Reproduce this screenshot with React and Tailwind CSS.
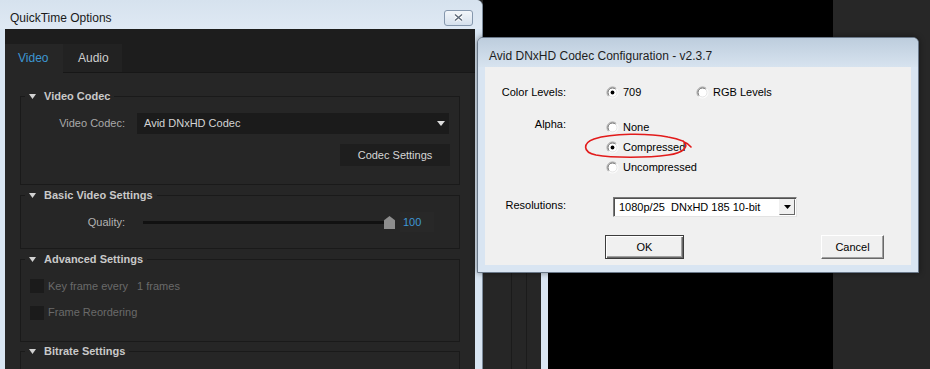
import React from "react";

// Windows classic radio button
const Radio = ({ checked }) => (
  <svg width="13" height="13" viewBox="0 0 13 13" className="shrink-0">
    <circle cx="6.5" cy="6.5" r="5.5" fill="#fff" />
    <path d="M10.4 2.6A5.5 5.5 0 0 0 2.6 10.4" fill="none" stroke="#a0a0a0" />
    <path d="M9.7 3.3A4.5 4.5 0 0 0 3.3 9.7" fill="none" stroke="#696969" />
    <path d="M2.6 10.4A5.5 5.5 0 0 0 10.4 2.6" fill="none" stroke="#ffffff" />
    <path d="M3.3 9.7A4.5 4.5 0 0 0 9.7 3.3" fill="none" stroke="#e3e3e3" />
    {checked && <circle cx="6.5" cy="6.5" r="1.9" fill="#000" />}
  </svg>
);

const RadioItem = ({ checked, label, className = "" }) => (
  <div className={`flex items-center gap-[4px] ${className}`}>
    <Radio checked={checked} />
    <span>{label}</span>
  </div>
);

const CloseButton = () => (
  <div className="w-[29px] h-[16px] rounded-[3px] border border-[#8597ad] bg-gradient-to-b from-[#f2f6fa] to-[#d6e1ed] flex items-center justify-center">
    <svg width="11" height="9" viewBox="0 0 11 9">
      <path d="M2 1.5L9 7.5M9 1.5L2 7.5" stroke="#fff" strokeWidth="3.4" />
      <path d="M2 1.5L9 7.5M9 1.5L2 7.5" stroke="#5b6777" strokeWidth="1.5" />
    </svg>
  </div>
);

const Group = ({ title, className = "", children }) => (
  <fieldset className={`mx-[15px] border border-[#1a1a1a] ${className}`}>
    <legend className="ml-[4px] px-[4px] h-[16px] flex items-center gap-[8px] text-[11px] font-bold text-[#c9c9c9]">
      <svg width="7" height="5" viewBox="0 0 7 5" className="shrink-0">
        <path d="M0 0h7L3.5 5z" fill="#d2d2d2" />
      </svg>
      <span>{title}</span>
    </legend>
    {children}
  </fieldset>
);

const Checkbox = ({ label }) => (
  <div className="flex items-center ml-[9px] h-[14px]">
    <div className="w-[14px] h-[14px] bg-[#1b1b1b]" />
    <span className="ml-[4px] text-[#6a6a6a]">{label}</span>
  </div>
);

const QuickTimeWindow = () => (
  <div className="absolute left-0 top-0 w-[483px] h-[400px] flex flex-col bg-[#d8e5f2] border-r border-[#7d8c9c] rounded-tr-[6px]">
    <div className="h-[29px] shrink-0 flex items-center justify-between pl-[10px] pr-[9px] pt-[6px] rounded-tr-[6px] bg-gradient-to-b from-[#d6e2ee] to-[#dfe9f4]">
      <span className="text-[12px] text-[#1a1a1a]">QuickTime Options</span>
      <CloseButton />
    </div>
    <div className="flex-1 ml-[5px] mr-[7px] bg-[#1d1d1d] flex flex-col">
      <div className="h-[43px] shrink-0 flex items-end text-[12px]">
        <div className="relative z-10 -mb-px w-[58px] h-[29px] pl-[13px] leading-[29px] bg-[#262626] text-[#3d96d2]">
          Video
        </div>
        <div className="w-[59px] h-[28px] pl-[15px] leading-[28px] bg-[#222222] text-[#cfcfcf]">
          Audio
        </div>
      </div>
      <div className="flex-1 bg-[#262626] border-t border-[#171717] flex flex-col text-[11px]">
        <Group title="Video Codec" className="mt-[15px] pb-[18px] flex flex-col">
          <div className="mt-[9px] flex items-center">
            <span className="w-[104px] text-right text-[#a9a9a9]">Video Codec:</span>
            <div className="ml-[12px] w-[312px] h-[21px] bg-[#1b1b1b] flex items-center justify-between pl-[7px] pr-[4px] text-[#d4d4d4]">
              <span>Avid DNxHD Codec</span>
              <svg width="8" height="5" viewBox="0 0 8 5">
                <path d="M0 0h8L4 5z" fill="#dcdcdc" />
              </svg>
            </div>
          </div>
          <div className="mt-[10px] self-end mr-[9px] w-[110px] h-[22px] bg-[#1e1e1e] flex items-center justify-center text-[#d6d6d6]">
            Codec Settings
          </div>
        </Group>

        <Group title="Basic Video Settings" className="mt-[2px] pb-[16px]">
          <div className="mt-[9px] h-[20px] flex items-center">
            <span className="w-[104px] text-right text-[#b2b2b2]">Quality:</span>
            <div className="relative ml-[18px] w-[252px] h-[13px] flex items-center">
              <div className="w-[247px] h-[3px] bg-[#111111]" />
              <svg width="11" height="13" viewBox="0 0 11 13" className="absolute right-0 top-0">
                <path d="M0 4.5Q0 4 1 3.4L5.5 0L10 3.4Q11 4 11 4.5V13H0Z" fill="#8d8d8d" />
              </svg>
            </div>
            <div className="ml-[5px] px-[3px] h-[20px] w-[34px] flex items-center bg-[#282828] text-[#3e97d4]">100</div>
          </div>
        </Group>

        <Group title="Advanced Settings" className="mt-[2px] pb-[21px] flex flex-col">
          <div className="mt-[11px] flex items-center">
            <Checkbox label="Key frame every" />
            <span className="ml-[9px] text-[#6a6a6a]">1 frames</span>
          </div>
          <div className="mt-[11px]">
            <Checkbox label="Frame Reordering" />
          </div>
        </Group>

        <Group title="Bitrate Settings" className="mt-[2px] h-[60px]" />
      </div>
    </div>
  </div>
);

const WinButton = ({ label, isDefault, className = "" }) => (
  <div
    className={`h-[24px] flex items-center justify-center bg-[#f0f0f0] ${
      isDefault
        ? "border border-[#3c3c3c] shadow-[inset_1px_1px_0_#fff,inset_-1px_-1px_0_#696969,inset_-2px_-2px_0_#a0a0a0]"
        : "border border-t-white border-l-white border-r-[#696969] border-b-[#696969] shadow-[inset_-1px_-1px_0_#a0a0a0]"
    } ${className}`}
  >
    {label}
  </div>
);

const AvidDialog = () => (
  <div className="absolute left-[477px] top-[37px] w-[442px] h-[236px] flex flex-col border border-[#6a7889] rounded-t-[6px] bg-[#d9e5f2] shadow-[0_0_6px_rgba(0,0,0,0.45)]">
    <div className="h-[29px] shrink-0 flex items-center pl-[11px] pt-[7px] rounded-t-[5px] bg-gradient-to-b from-[#bdcddd] to-[#d7e3ef] text-[12px] text-[#1e1e1e]">
      Avid DNxHD Codec Configuration - v2.3.7
    </div>
    <div className="relative flex-1 ml-[7px] mr-[7px] mb-[7px] bg-[#f0f0f0] flex flex-col text-[11px] text-black">
      <div className="mt-[17px] h-[16px] flex items-center">
        <span className="w-[81px] text-right">Color Levels:</span>
        <div className="ml-[40px] flex">
          <RadioItem checked label="709" className="w-[90px]" />
          <RadioItem label="RGB Levels" />
        </div>
      </div>

      <div className="mt-[17px] flex items-start">
        <span className="w-[81px] text-right leading-[14px]">Alpha:</span>
        <div className="ml-[40px] flex flex-col">
          <RadioItem label="None" className="h-[20px]" />
          <RadioItem checked label="Compressed" className="h-[20px]" />
          <RadioItem label="Uncompressed" className="h-[20px]" />
        </div>
      </div>

      <div className="mt-[20px] flex items-start">
        <span className="w-[81px] text-right pt-[1px] leading-[14px]">Resolutions:</span>
        <div className="ml-[47px] w-[184px] h-[20px] flex bg-white border border-t-[#7a7a7a] border-l-[#7a7a7a] border-r-[#e3e3e3] border-b-[#e3e3e3] shadow-[inset_1px_1px_0_#505050]">
          <span className="flex-1 pl-[5px] leading-[18px] whitespace-pre">1080p/25  DNxHD 185 10-bit</span>
          <div className="w-[16px] h-[16px] mt-[1px] mr-[1px] bg-[#f0f0f0] border border-t-[#f0f0f0] border-l-[#f0f0f0] border-r-[#696969] border-b-[#696969] flex items-center justify-center">
            <svg width="7" height="4" viewBox="0 0 7 4">
              <path d="M0 0h7L3.5 4z" fill="#000" />
            </svg>
          </div>
        </div>
      </div>

      <div className="mt-[18px] flex">
        <WinButton label="OK" isDefault className="ml-[120px] w-[79px]" />
        <WinButton label="Cancel" className="ml-auto mr-[27px] w-[63px]" />
      </div>

      <svg className="absolute left-0 top-0 pointer-events-none" width="426" height="198" viewBox="0 0 426 198">
        <path
          d="M198 74C205 79 199 86 183 88C163 91 127 91 111 88C97 85 98 76 109 72C127 66 163 66 183 70C195 72 203 76 206 80"
          fill="none"
          stroke="#e21b1b"
          strokeWidth="1.6"
          strokeLinecap="round"
        />
      </svg>
    </div>
  </div>
);

export default function App() {
  return (
    <div className="relative w-[930px] h-[369px] overflow-hidden bg-[#272727] font-['Liberation_Sans',Arial,sans-serif]">
      <div className="absolute left-[483px] top-0 w-[350px] h-full bg-black" />
      <div className="absolute left-[483px] top-[60px] bottom-0 w-[65px] flex">
        <div className="w-[29px] bg-[#262626] border-r border-[#1b1b1b]" />
        <div className="w-[15px] bg-[#262626] border-r border-[#1b1b1b]" />
        <div className="flex-1 bg-[#262626]" />
        <div className="w-[7px] bg-[#dae6f3]" />
      </div>
      <QuickTimeWindow />
      <AvidDialog />
    </div>
  );
}
